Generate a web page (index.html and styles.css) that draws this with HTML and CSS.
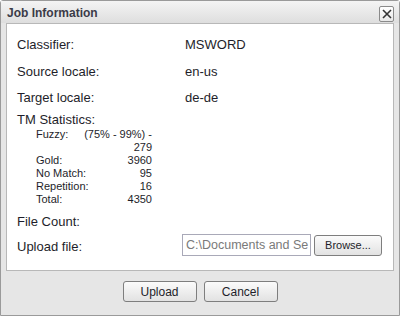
FILE: index.html
```html
<!DOCTYPE html>
<html>
<head>
<meta charset="utf-8">
<link rel="stylesheet" href="styles.css">
</head>
<body>
<div class="dialog">
  <div class="titlebar">
    <span class="title">Job Information</span>
    <span class="close">
      <svg width="10" height="10" viewBox="0 0 10 10"><path d="M1 1 L9 9 M9 1 L1 9" stroke="#333" stroke-width="1.6" fill="none"/></svg>
    </span>
  </div>
  <div class="panel">
    <div class="row r1"><span class="label">Classifier:</span><span class="value">MSWORD</span></div>
    <div class="row r2"><span class="label">Source locale:</span><span class="value">en-us</span></div>
    <div class="row r3"><span class="label">Target locale:</span><span class="value">de-de</span></div>
    <div class="tm-label">TM Statistics:</div>
    <div class="stats">
      <span class="s-label">Fuzzy:</span><span class="s-value">(75% - 99%) -<br>279</span>
      <span class="s-label">Gold:</span><span class="s-value">3960</span>
      <span class="s-label">No Match:</span><span class="s-value">95</span>
      <span class="s-label">Repetition:</span><span class="s-value">16</span>
      <span class="s-label">Total:</span><span class="s-value">4350</span>
    </div>
    <div class="filecount">File Count:</div>
    <div class="upload-row">
      <span class="label">Upload file:</span>
      <span class="file">
        <span class="file-input">C:\Documents and Se</span>
        <span class="btn browse">Browse...</span>
      </span>
    </div>
  </div>
  <div class="footer">
    <span class="btn action">Upload</span>
    <span class="btn action">Cancel</span>
  </div>
</div>
</body>
</html>
```
FILE: styles.css
```css
html, body {
  margin: 0;
  padding: 0;
  background: #ffffff;
}
.dialog {
  width: 400px;
  height: 316px;
  box-sizing: border-box;
  border: 1px solid #9a9a9a;
  border-radius: 3px 3px 0 0;
  background: #e6e6e6;
  font-family: "Liberation Sans", Arial, sans-serif;
  color: #1e1e2a;
  display: flex;
  flex-direction: column;
}
.titlebar {
  height: 22px;
  display: flex;
  align-items: center;
  justify-content: space-between;
  padding: 0 5px 0 6px;
  background: linear-gradient(#f4f4f4, #dedede);
}
.title {
  font-weight: bold;
  font-size: 12px;
  color: #3b3b48;
  padding-top: 1px;
}
.close {
  width: 13px;
  height: 14px;
  border: 1px solid #8a8a8a;
  border-radius: 2px;
  background: linear-gradient(#ffffff, #e8e8e8);
  display: flex;
  align-items: center;
  justify-content: center;
  margin-top: 3px;
}
.panel {
  margin: 0 5px;
  border: 1px solid #b8b8b8;
  background: #ffffff;
  height: 248px;
  box-sizing: border-box;
  padding: 8px 10px 0 10px;
  font-size: 13px;
}
.row {
  display: grid;
  grid-template-columns: 168px 1fr;
  height: 26px;
  line-height: 26px;
}
.r2 { height: 27px; line-height: 27px; }
.tm-label {
  line-height: 16px;
  margin-top: 1px;
}
.stats {
  display: grid;
  grid-template-columns: 46px 70px;
  padding-left: 19px;
  font-size: 11px;
  line-height: 13px;
}
.s-label {
  white-space: nowrap;
}
.s-value {
  text-align: right;
}
.filecount {
  line-height: 16px;
  margin-top: 8px;
}
.upload-row {
  display: grid;
  grid-template-columns: 165px 1fr;
  align-items: center;
  margin-top: 4px;
  height: 22px;
}
.upload-row .label {
  padding-top: 2px;
}
.file {
  display: flex;
  align-items: center;
  gap: 3px;
}
.file-input {
  width: 124px;
  height: 20px;
  border: 1px solid #a9a9b8;
  color: #7a7a7a;
  font-size: 12.5px;
  line-height: 20px;
  padding-left: 3px;
  white-space: nowrap;
  overflow: hidden;
}
.btn {
  display: flex;
  align-items: center;
  justify-content: center;
  box-sizing: border-box;
  border: 1px solid #7e7e7e;
  border-radius: 3px;
  background: linear-gradient(#fbfbfb, #e2e2e2);
  color: #1e1e2a;
  font-size: 11px;
}
.browse {
  width: 68px;
  height: 21px;
}
.footer {
  display: flex;
  justify-content: center;
  gap: 7px;
  padding-top: 10px;
}
.action {
  width: 74px;
  height: 21px;
  font-size: 12px;
}
```
